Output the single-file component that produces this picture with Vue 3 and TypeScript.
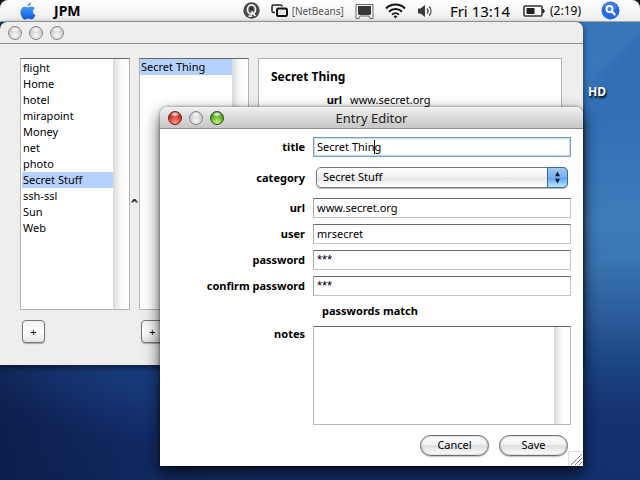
<script setup lang="ts">
import { ref, computed } from 'vue'

const categories = ['flight', 'Home', 'hotel', 'mirapoint', 'Money', 'net', 'photo', 'Secret Stuff', 'ssh-ssl', 'Sun', 'Web']
const selectedCategory = ref('Secret Stuff')
const entries = ['Secret Thing']
const selectedEntry = ref('Secret Thing')

const title = ref('Secret Thing')
const category = ref('Secret Stuff')
const url = ref('www.secret.org')
const user = ref('mrsecret')
const password = ref('***')
const confirmation = ref('***')
const notes = ref('')
const beforeCaret = computed(() => title.value.slice(0, -1))
const matchText = computed(() => (password.value === confirmation.value ? 'passwords match' : 'passwords differ'))
</script>

<template>
  <div class="desktop">
    <header class="menu-frame">
      <nav class="menu-bar">
        <svg class="apple" width="16" height="18" viewBox="0 0 16 18">
          <defs>
            <linearGradient id="apple-fill" x1="0" y1="0" x2="0" y2="1">
              <stop offset="0" stop-color="#5aa4f6" />
              <stop offset="0.5" stop-color="#2f86f2" />
              <stop offset="1" stop-color="#1257dd" />
            </linearGradient>
          </defs>
          <path fill="url(#apple-fill)" d="M11.1 0.4c.1 1.9-1.500 3.900-3.500 3.900C7.400 2.400 9.200.6 11.100.4zM7.900 5.400c.9 0 1.800-.9 3.500-.9 1.400 0 2.600.7 3.400 1.800-2.900 1.800-2.400 5.600.7 6.800-.8 2.200-2.200 4.400-3.900 4.400-1.200 0-1.700-.7-3.200-.7s-2.100.7-3.200.7C2.900 17.500.5 13.700.5 10.200c0-3.500 2.200-5.500 4.400-5.500 1.400 0 2.400.7 3 .7z" />
        </svg>
        <strong class="app-name">JPM</strong>

        <div class="status">
          <svg width="17" height="17" viewBox="0 0 17 17">
            <circle cx="8.500" cy="8.500" r="8.200" fill="#4a4a4a" />
            <ellipse cx="8.500" cy="7.500" rx="4" ry="4.600" fill="#555" stroke="#f4f4f4" stroke-width="1.700" />
            <path d="M8.500 9.500l3.800 4.500M5.500 14.200h3.500" stroke="#f4f4f4" stroke-width="1.800" />
            <ellipse cx="8.300" cy="6.500" rx="1.600" ry="2" fill="#2e2e2e" />
          </svg>
          <span class="switcher">
            <svg width="17" height="13" viewBox="0 0 17 13">
              <path d="M4 8.500H2.500A1.500 1.500 0 0 1 1 7V2.500A1.500 1.500 0 0 1 2.500 1h7A1.500 1.500 0 0 1 11 2.500" fill="none" stroke="#222" stroke-width="1.500" />
              <rect x="6" y="4.500" width="10" height="7.500" rx="1.500" fill="#e6e6e6" stroke="#111" stroke-width="2" />
            </svg>
            [NetBeans]
          </span>
          <svg width="19" height="16" viewBox="0 0 19 16">
            <path d="M1 15.500h3l1-2.500h9l1 2.500h3V1.500H1z" fill="#f6f6f6" stroke="#666" stroke-width="1" />
            <path d="M3 3h13v8l-1 1H4l-1-1z" fill="#383838" />
          </svg>
          <svg width="21" height="16" viewBox="0 0 21 16">
            <g fill="none" stroke="#161616" stroke-width="2">
              <path d="M1 5.500C6.200.3 14.800.3 20 5.500" />
              <path d="M4 8.700c3.600-3.500 9.400-3.500 13 0" />
              <path d="M7 11.600c2-1.900 5-1.900 7 0" />
            </g>
            <path d="M8.500 13.300c1.200-1 2.800-1 4 0l-2 2.300z" fill="#161616" />
          </svg>
          <svg width="16" height="14" viewBox="0 0 16 14">
            <path d="M1 4.500h2.500L8 1v12L3.500 9.500H1z" fill="#3b3b3b" />
            <path d="M10 4.500c1.200 1.400 1.200 3.600 0 5M12.200 2.500c2.300 2.600 2.300 6.400 0 9" fill="none" stroke="#555" stroke-width="1.400" />
          </svg>
          <time class="clock">Fri 13:14</time>
          <span class="battery">
            <svg width="22" height="12" viewBox="0 0 22 12">
              <rect x="1" y="1" width="18" height="10" rx="1" fill="#fff" stroke="#333" stroke-width="1.600" />
              <rect x="3.500" y="3" width="8" height="6" fill="#222" />
              <path d="M20 4l1.500 2L20 8z" fill="#222" stroke="#222" />
            </svg>
            (2:19)
          </span>
          <svg width="19" height="19" viewBox="0 0 19 19">
            <circle cx="9.500" cy="9.500" r="9" fill="#2469e6" />
            <ellipse cx="9.500" cy="5.500" rx="6.500" ry="4" fill="#5c96f2" opacity=".5" />
            <circle cx="8.500" cy="8" r="3" fill="none" stroke="#fff" stroke-width="1.800" />
            <path d="M10.800 10.300l3.400 3.600" stroke="#fff" stroke-width="2.200" />
          </svg>
        </div>
      </nav>
    </header>

    <span class="drive">HD</span>

    <main class="window manager">
      <div class="title-bar">
        <div class="lights">
          <button class="light" aria-label="Close"></button>
          <button class="light" aria-label="Minimize"></button>
          <button class="light" aria-label="Zoom"></button>
        </div>
      </div>
      <div class="panes">
        <section class="column">
          <div class="list roomy">
            <ul>
              <li v-for="name in categories" :key="name" :class="{ selected: name === selectedCategory }" @click="selectedCategory = name">{{ name }}</li>
            </ul>
            <div class="track"></div>
          </div>
          <button class="add" aria-label="Add category">+</button>
        </section>
        <div class="divider">
          <svg width="7" height="5" viewBox="0 0 7 5"><path d="M0 4.500L2.500 1h2L7 4.500H5L3.500 3 2 4.500z" fill="#333" /></svg>
        </div>
        <section class="column">
          <div class="list">
            <ul>
              <li v-for="name in entries" :key="name" :class="{ selected: name === selectedEntry }" @click="selectedEntry = name">{{ name }}</li>
            </ul>
            <div class="track"></div>
          </div>
          <button class="add" aria-label="Add entry">+</button>
        </section>
        <div class="divider"></div>
        <article class="detail">
          <h2>Secret Thing</h2>
          <dl>
            <dt>url</dt>
            <dd>www.secret.org</dd>
          </dl>
        </article>
      </div>
    </main>

    <form class="window editor" @submit.prevent>
      <div class="title-bar active">
        <div class="lights">
          <button type="button" class="light red" aria-label="Close editor"></button>
          <button type="button" class="light" aria-label="Minimize editor"></button>
          <button type="button" class="light green" aria-label="Zoom editor"></button>
        </div>
        <h1>Entry Editor</h1>
        <span></span>
      </div>
      <div class="fields">
        <div class="row">
          <label for="title">title</label>
          <div class="stack">
            <input id="title" v-model="title" class="focused" type="text" />
            <div class="caret-line" aria-hidden="true"><span>{{ beforeCaret }}</span><i></i></div>
          </div>
        </div>
        <div class="row popup-row">
          <label for="category">category</label>
          <div class="stack popup">
            <select id="category" v-model="category">
              <option v-for="name in categories" :key="name">{{ name }}</option>
            </select>
            <svg class="cap" width="21" height="19" viewBox="0 0 21 19">
              <path d="M10.500 3l2.800 5H7.700zM10.500 16l2.800-5H7.700z" fill="#0c1a33" />
            </svg>
          </div>
        </div>
        <div class="row">
          <label for="url">url</label>
          <input id="url" v-model="url" type="text" />
        </div>
        <div class="row">
          <label for="user">user</label>
          <input id="user" v-model="user" type="text" />
        </div>
        <div class="row">
          <label for="password">password</label>
          <input id="password" v-model="password" class="secret" type="text" autocomplete="off" />
        </div>
        <div class="row">
          <label for="confirm">confirm password</label>
          <input id="confirm" v-model="confirmation" class="secret" type="text" autocomplete="off" />
        </div>
        <div class="row">
          <output class="match" for="password confirm">{{ matchText }}</output>
        </div>
        <div class="row notes-row">
          <label for="notes">notes</label>
          <div class="notes">
            <textarea id="notes" v-model="notes"></textarea>
            <div class="track"></div>
          </div>
        </div>
      </div>
      <footer>
        <button type="button" class="pill">Cancel</button>
        <button type="submit" class="pill">Save</button>
      </footer>
      <svg class="grip" width="15" height="15" viewBox="0 0 15 15">
        <path d="M.5 15V.5H15" fill="none" stroke="#ddd" />
        <path d="M3 14L14 3M7 14l7-7M11 14l3-3" stroke="#7c879c" />
      </svg>
    </form>
  </div>
</template>

<style>
body {
  margin: 0;
}
</style>

<style scoped>
* {
  box-sizing: border-box;
}

.desktop {
  position: relative;
  min-height: 100vh;
  overflow: hidden;
  font: 11px/16px 'Lucida Grande', 'Noto Sans', sans-serif;
  color: #000;
  background:
    linear-gradient(135deg, rgba(90, 160, 205, 0.15), rgba(90, 160, 205, 0.2) 45%, transparent 65%) right 22px / 60px 70px no-repeat,
    radial-gradient(ellipse 150px 80px at 150px 365px, rgba(24, 62, 130, 0.8), transparent),
    linear-gradient(90deg, rgba(6, 12, 45, 0.5), transparent 40%),
    linear-gradient(180deg, #2f6cb0 0, #3270b6 25%, #3d7cb8 46%, #3a76b2 54%, #2a5b9a 66%, #1b4482 76%, #153272 86%, #12306c 100%);
}

.menu-frame {
  background: #111;
  height: 22px;
}

.menu-bar {
  display: flex;
  align-items: center;
  height: 22px;
  padding: 0 20px;
  border-bottom: 1px solid #a5a5a5;
  border-radius: 8px 8px 0 0;
  background: linear-gradient(#fff, #f5f5f5 60%, #ececec);
}

.app-name {
  margin-left: 18px;
  font-size: 14px;
}

.status {
  display: flex;
  align-items: center;
  gap: 11px;
  margin-left: auto;
}

.switcher,
.battery {
  display: flex;
  align-items: center;
  gap: 4px;
  white-space: nowrap;
}

.switcher {
  font-size: 10px;
  color: #555;
}

.battery {
  gap: 5px;
  font-size: 12px;
  margin-right: 9px;
}

.clock {
  font-size: 15px;
  margin: 0 2px 0 6px;
}

.drive {
  position: absolute;
  top: 84px;
  right: 34px;
  font-size: 12px;
  font-weight: 700;
  color: #fff;
  text-shadow: 1px 2px 2px #000;
}

.window {
  position: absolute;
  right: 57px;
}

.manager {
  top: 22px;
  left: 0;
  border-radius: 7px 7px 0 0;
  background: #eee;
  box-shadow: 0 2px 6px rgba(0, 0, 0, 0.6);
}

.title-bar {
  display: grid;
  grid-template-columns: 1fr auto 1fr;
  align-items: center;
  height: 22px;
  padding: 0 8px;
  border-bottom: 1px solid #8d8d8d;
}

.title-bar h1 {
  margin: 0;
  font-size: 13px;
  font-weight: 400;
  color: #222;
}

.title-bar.active {
  border-radius: 7px 7px 0 0;
  background: linear-gradient(#f2f2f2, #dedede 40%, #c6c6c6);
}

.lights {
  display: flex;
  gap: 7px;
}

.light {
  width: 14px;
  height: 14px;
  padding: 0;
  border: 1px solid #858585;
  border-radius: 50%;
  background: radial-gradient(ellipse 5px 3px at 50% 20%, #fff, transparent), radial-gradient(circle at 50% 70%, #f7f7f7, #c4c4c4 75%);
}

.light.red {
  border-color: #6f1d18;
  background: radial-gradient(ellipse 5px 3px at 50% 18%, #fff, transparent), radial-gradient(circle at 50% 85%, #ff9c8c, #dc3a30 50%, #8f1a14);
}

.light.green {
  border-color: #27500f;
  background: radial-gradient(ellipse 5px 3px at 50% 18%, #fff, transparent), radial-gradient(circle at 50% 85%, #c4f47a, #62b52a 50%, #2b6a10);
}

.panes {
  display: grid;
  grid-template-columns: 110px 9px 110px 9px 1fr;
  padding: 14px 21px 22px 20px;
}

.column {
  display: flex;
  flex-direction: column;
  align-items: flex-start;
  gap: 10px;
}

.list {
  display: flex;
  align-self: stretch;
  height: 252px;
  border: 1px solid #b3b3b3;
  border-top-color: #666;
  background: #fff;
}

.list ul {
  flex: 1;
  margin: 0;
  padding: 0;
  list-style: none;
}

.list.roomy ul {
  padding: 1px 0 1px 1px;
}

.list li {
  padding-left: 1px;
  white-space: nowrap;
}

.list .selected {
  background: #b5d2fc;
}

.track {
  width: 16px;
  background: linear-gradient(90deg, #d8d8d8, #ebebeb 25%, #fafafa 50%, #fff);
}

.divider {
  display: flex;
  justify-content: center;
  padding-top: 140px;
}

.add {
  width: 23px;
  height: 23px;
  margin-left: 2px;
  padding: 0;
  border: 1px solid #777;
  border-radius: 4px;
  background: linear-gradient(#f2f2f2, #fff 50%, #e2e2e2);
  box-shadow: 0 1px 1px rgba(0, 0, 0, 0.3);
  font: inherit;
  line-height: 20px;
  color: #000;
}

.detail {
  padding: 10px 12px;
  border: 1px solid #b3b3b3;
  background: #fff;
}

.detail h2 {
  margin: 0;
  font-size: 12px;
  line-height: 16px;
}

.detail dl {
  display: grid;
  grid-template-columns: 71px 1fr;
  gap: 8px;
  margin: 7px 0 0;
}

.detail dt {
  font-weight: 700;
  text-align: right;
}

.detail dd {
  margin: 0;
}

.editor {
  top: 107px;
  left: 160px;
  border-radius: 7px 7px 0 0;
  background: #fff;
  box-shadow: 0 7px 16px rgba(0, 0, 0, 0.75), 0 0 3px rgba(0, 0, 0, 0.5);
}

.fields {
  display: flex;
  flex-direction: column;
  gap: 6px;
  padding: 8px 12px 10px 0;
}

.row {
  display: grid;
  grid-template-columns: 145px 1fr;
  column-gap: 8px;
  align-items: center;
}

.row label {
  font-weight: 700;
  text-align: right;
}

.popup-row {
  margin: 4px 0;
}

.stack {
  display: grid;
}

.stack > * {
  grid-area: 1 / 1;
}

input {
  width: 100%;
  height: 20px;
  padding: 0 3px 2px;
  border: 1px solid #c4c4c4;
  border-top-color: #6a6a6a;
  border-left-color: #aaa;
  border-radius: 0;
  outline: none;
  background: #fff;
  font: inherit;
  color: #000;
}

input.focused {
  border: 1px solid #7f9cc0;
  box-shadow: inset 0 0 1px 1px #c3d7ee;
}

input.secret {
  font-family: 'Liberation Sans', sans-serif;
  font-size: 13px;
}

.caret-line {
  display: flex;
  align-items: center;
  padding-left: 4px;
  white-space: pre;
  pointer-events: none;
}

.caret-line span {
  visibility: hidden;
}

.caret-line i {
  width: 1px;
  height: 14px;
  background: #000;
}

.popup {
  margin: 0 3px;
}

select {
  appearance: none;
  width: 100%;
  height: 21px;
  padding: 0 24px 2px 6px;
  border: 1px solid #777;
  border-radius: 5px;
  outline: none;
  background: linear-gradient(#fff, #f2f2f2 45%, #e6e6e6 55%, #fff);
  box-shadow: 0 1px 1px rgba(0, 0, 0, 0.3);
  font: inherit;
  color: #000;
}

.cap {
  align-self: center;
  justify-self: end;
  height: 21px;
  border-radius: 0 5px 5px 0;
  border: 1px solid #3c68a8;
  background: linear-gradient(#a5c8f2, #7db2ee 45%, #62a8f0 55%, #b8e6ff);
  pointer-events: none;
}

.match {
  grid-column: 2;
  padding: 1px 9px 0;
  margin-bottom: 1px;
  font-weight: 700;
}

.notes-row {
  align-items: start;
}

.notes {
  display: flex;
  height: 99px;
  border: 1px solid #b8b8b8;
  border-top-color: #666;
}

textarea {
  flex: 1;
  min-width: 0;
  padding: 2px 3px;
  border: 0;
  outline: none;
  resize: none;
  background: #fff;
  font: inherit;
}

footer {
  display: flex;
  justify-content: flex-end;
  gap: 10px;
  padding: 0 15px 10px;
}

.pill {
  width: 69px;
  height: 21px;
  padding: 0 0 2px;
  border: 1px solid #6c6c6c;
  border-radius: 11px;
  background: linear-gradient(#fff, #f1f1f1 45%, #dedede 52%, #fff);
  box-shadow: inset 0 0 2px #999, 0 1px 1px rgba(0, 0, 0, 0.25);
  font: inherit;
  color: #000;
}

.grip {
  position: absolute;
  right: 0;
  bottom: 0;
}
</style>
